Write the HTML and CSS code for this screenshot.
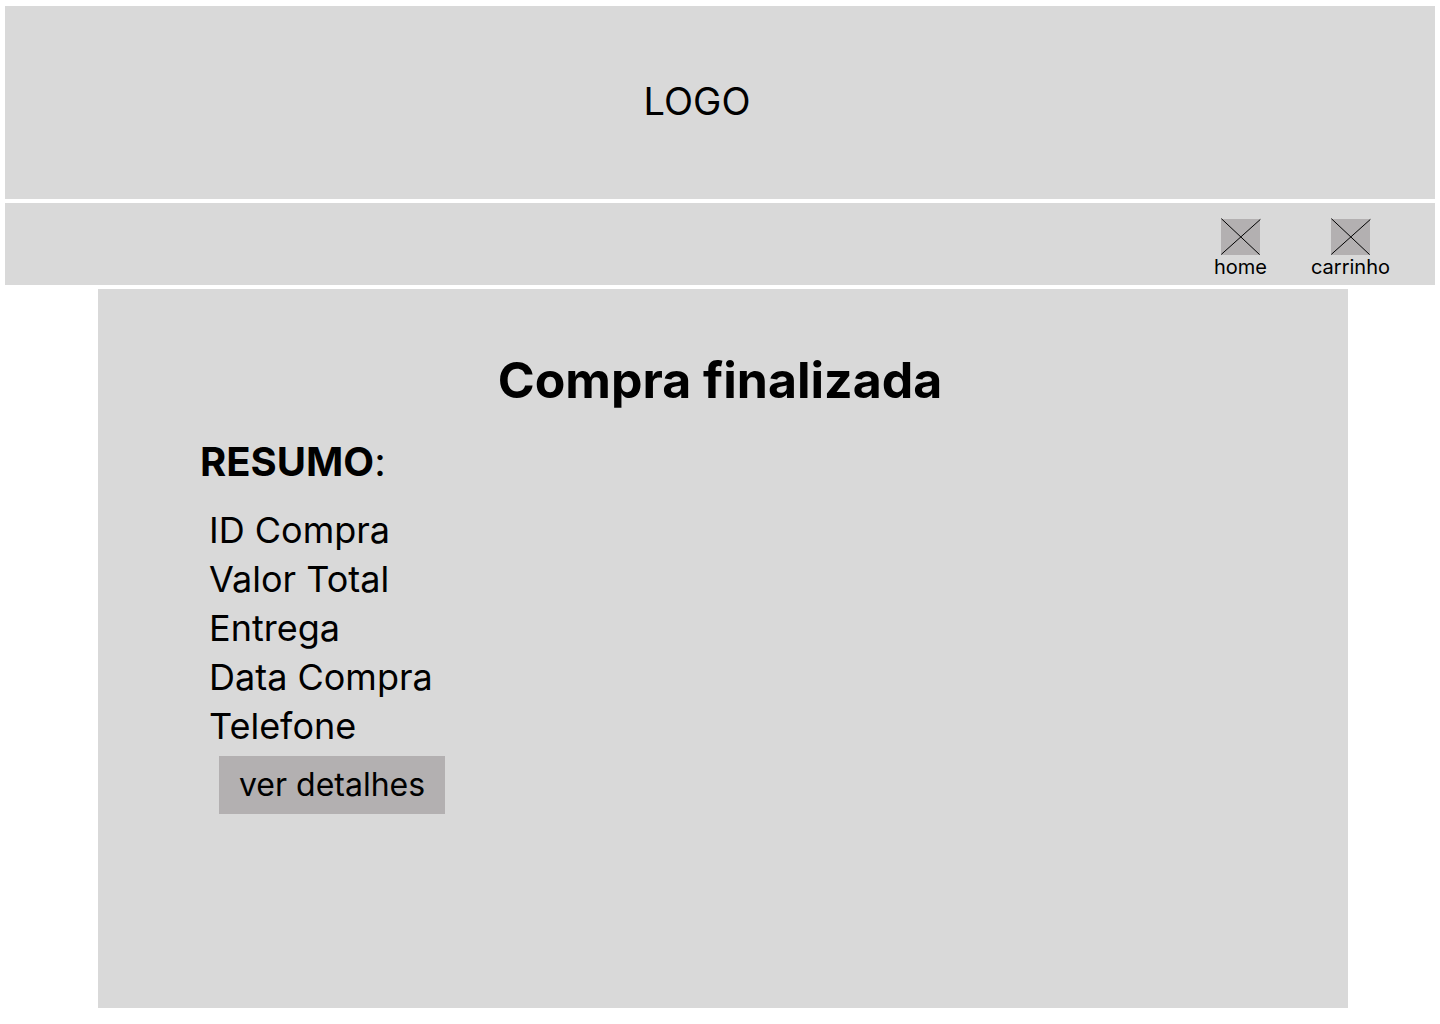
FILE: index.html
```html
<!DOCTYPE html>
<html lang="pt-BR">
<head>
<meta charset="utf-8">
<title>Compra finalizada</title>
<link rel="stylesheet" href="styles.css">
</head>
<body>
<header class="banner"><span class="logo">LOGO</span></header>
<nav class="navbar">
  <a class="nav-link" href="#home">
    <svg class="nav-icon" viewBox="0 0 39 36" aria-hidden="true"><path d="M0.3 -0.4L38.6 35.6M39.4 0.4L0.3 35.4"/></svg>
    <span>home</span>
  </a>
  <a class="nav-link" href="#carrinho">
    <svg class="nav-icon" viewBox="0 0 39 36" aria-hidden="true"><path d="M0.3 -0.4L38.6 35.6M39.4 0.4L0.3 35.4"/></svg>
    <span>carrinho</span>
  </a>
</nav>
<main class="panel">
  <h1 class="title">Compra finalizada</h1>
  <section class="summary">
    <h2 class="summary-title"><strong>RESUMO</strong>:</h2>
    <ul class="fields">
      <li>ID Compra</li>
      <li>Valor Total</li>
      <li>Entrega</li>
      <li>Data Compra</li>
      <li>Telefone</li>
    </ul>
    <button class="details" type="button">ver detalhes</button>
  </section>
</main>
</body>
</html>
```

FILE: styles.css
```css
* {
  box-sizing: border-box;
}

body {
  display: flex;
  flex-direction: column;
  gap: 4px;
  min-height: 100vh;
  margin: 0;
  padding: 6px 5px 16px;
  background: #fff;
  color: #000;
  font-family: Inter, sans-serif;
}

.banner {
  display: flex;
  justify-content: center;
  padding: 71px 46px 74px 0;
  background: #d9d9d9;
}

.logo {
  font-size: 38px;
  line-height: 48px;
}

.navbar {
  display: flex;
  justify-content: flex-end;
  gap: 44px;
  padding: 16px 45px 6px;
  background: #d9d9d9;
}

.nav-link {
  display: flex;
  flex-direction: column;
  align-items: center;
  color: inherit;
  font-size: 20px;
  line-height: 24px;
  text-decoration: none;
}

.nav-icon {
  width: 39px;
  height: 36px;
  background: #b3b0b1;
  fill: none;
  stroke: #000;
  overflow: visible;
}

.panel {
  flex: 1;
  margin: 0 87px 0 93px;
  padding: 59px 108px 60px 102px;
  background: #d9d9d9;
}

.title {
  margin: 0;
  font-size: 50px;
  line-height: 64px;
  text-align: center;
}

.summary-title {
  margin: 25px 0 20px;
  font-size: 40px;
  font-weight: 400;
  line-height: 49px;
}

.fields {
  margin: 0;
  padding: 0 0 0 9px;
  font-size: 36px;
  line-height: 49px;
  list-style: none;
}

.details {
  display: block;
  margin: 5px 0 0 19px;
  padding: 9px 20px;
  border: 0;
  background: #b3b0b1;
  color: inherit;
  font-family: inherit;
  font-size: 32px;
  line-height: 40px;
}
```
